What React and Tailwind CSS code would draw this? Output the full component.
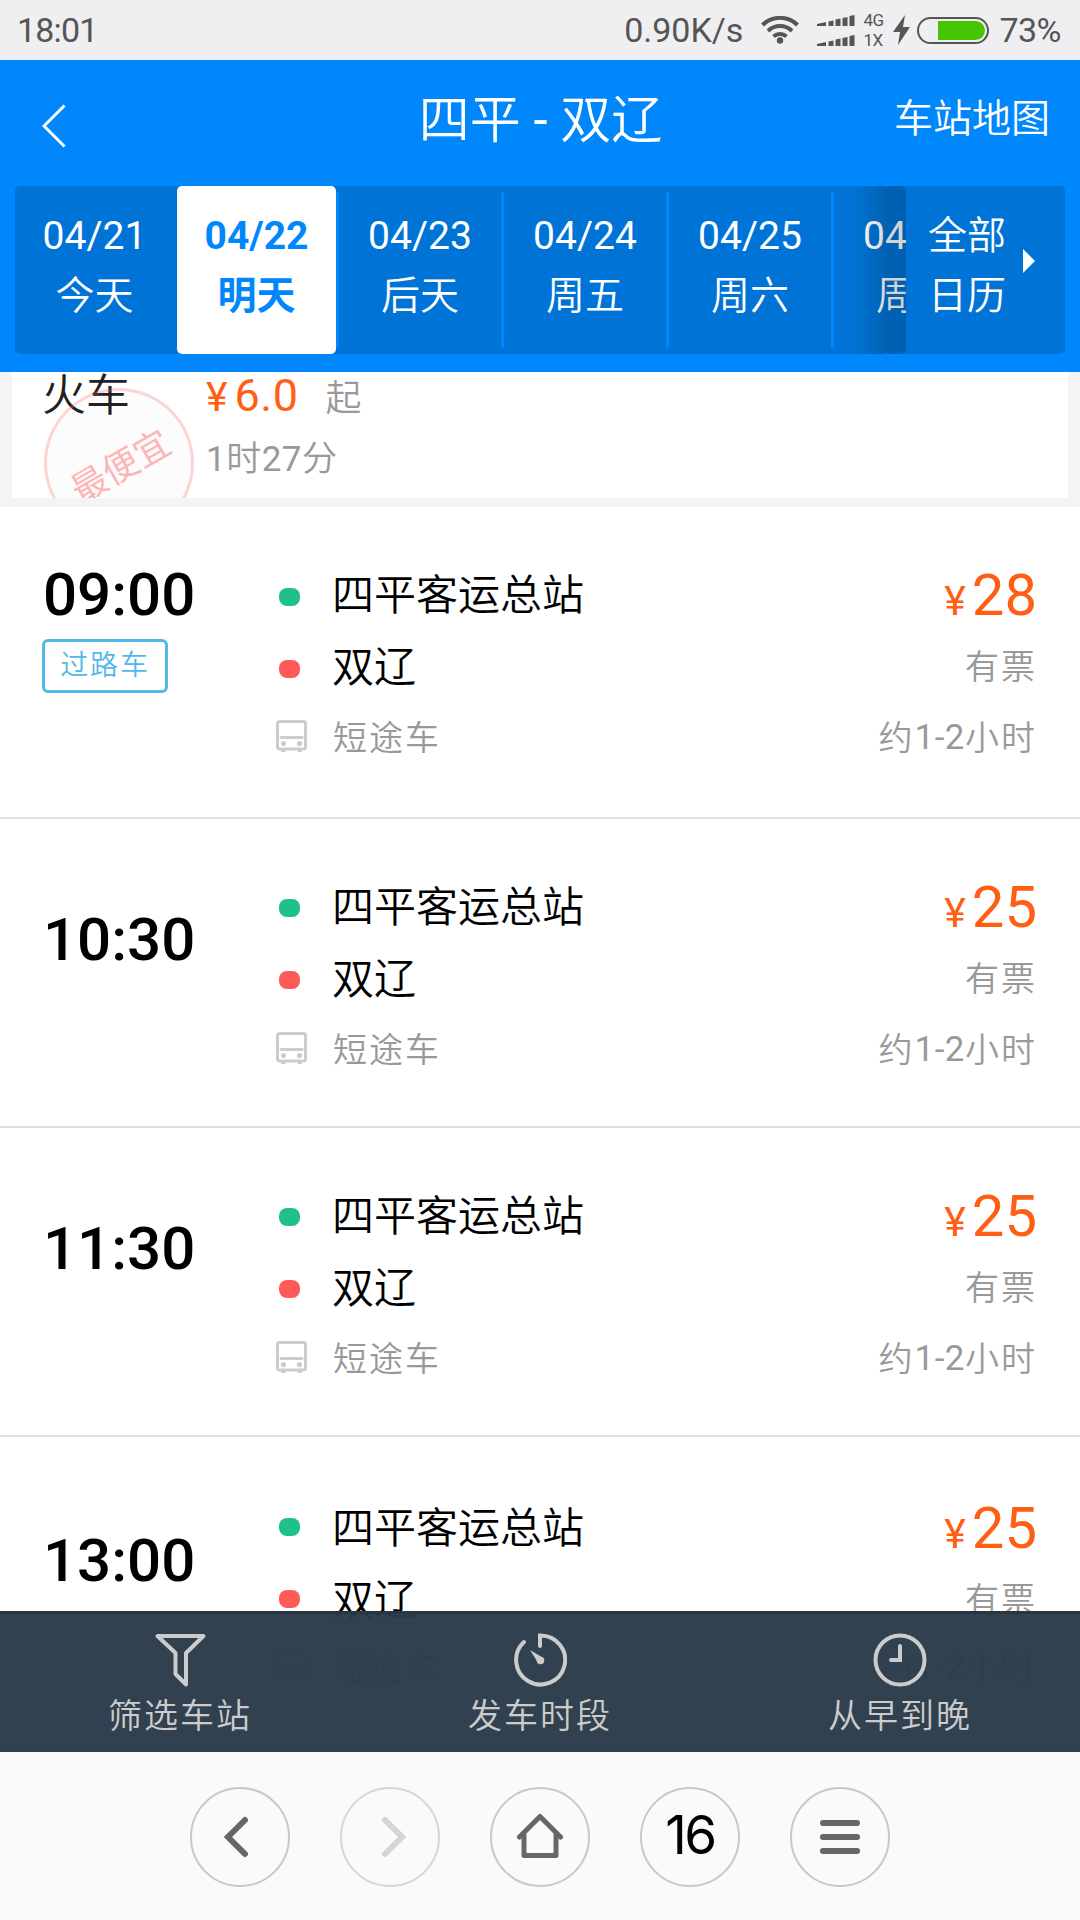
const days = [
  { date: '04/21', label: '今天' },
  { date: '04/22', label: '明天' },
  { date: '04/23', label: '后天' },
  { date: '04/24', label: '周五' },
  { date: '04/25', label: '周六' },
  { date: '04/26', label: '周日' },
];

const trips = [
  { time: '09:00', price: 28, tag: '过路车' },
  { time: '10:30', price: 25 },
  { time: '11:30', price: 25 },
  { time: '13:00', price: 25, last: true },
];

function StatusBar() {
  return (
    <div className="flex h-[60px] shrink-0 items-center bg-[#efeff1] pl-[17px] pr-[19px] text-[34px] text-[#555]">
      <span className="w-[84px] tracking-[-0.8px]">18:01</span>
      <span className="ml-auto">0.90K/s</span>
      <svg className="ml-[18px] h-[28px] w-[38px]" viewBox="0 0 38 28" fill="none" stroke="#555" strokeWidth="4">
        <path d="M1.500 9 A25 25 0 0 1 36.500 9" />
        <path d="M7 15 A17 17 0 0 1 31 15" />
        <path d="M12.500 20.500 A9.500 9.500 0 0 1 25.500 20.500" />
        <circle cx="19" cy="24.500" r="3.200" fill="#555" stroke="none" />
      </svg>
      <div className="ml-[18px] flex flex-col gap-[9px]">
        <Signal />
        <Signal />
      </div>
      <div className="ml-[8px] flex w-[22px] flex-col text-[17px] leading-[20px] tracking-[-0.5px]">
        <span>4G</span>
        <span>1X</span>
      </div>
      <svg className="ml-[8px] h-[30px] w-[17px]" viewBox="0 0 17 30" fill="#555">
        <path d="M12 0 L0 17 H7 L5 30 L17 12 H10 Z" />
      </svg>
      <div className="ml-[7px] flex h-[27px] w-[72px] justify-end rounded-full border-2 border-[#555] p-[2px]">
        <div className="h-full w-[47px] rounded-r-full bg-[#47c400]"></div>
      </div>
      <span className="ml-[10px] tracking-[-0.5px]">73%</span>
    </div>
  );
}

function Signal() {
  return (
    <svg className="h-[11px] w-[38px]" viewBox="0 0 38 11" fill="#555">
      <path d="M0 9 L9 7 V11 H0 Z M11.500 6.500 L16.500 5.500 V11 H11.500 Z M18.500 4.500 L23.500 3.500 V11 H18.500 Z M25.500 3 L30.500 2 V11 H25.500 Z M32.500 1 L37.500 0 V11 H32.500 Z" />
    </svg>
  );
}

function Header() {
  return (
    <div className="flex h-[126px] items-center pl-[42px] pr-[30px] text-white">
      <div className="flex flex-1 items-center">
        <svg className="mt-[6px] h-[44px] w-[24px]" viewBox="0 0 24 44" fill="none" stroke="#fff" strokeWidth="3">
          <path d="M22.500 1.500 L2 22 L22.500 42.500" />
        </svg>
      </div>
      <h1 className="mb-[4px] mr-[11px] text-[51px] font-[350]">
        四平<span className="font-normal"> - </span>双辽
      </h1>
      <div className="mb-[8px] flex-1 text-right text-[39px] font-[350]">车站地图</div>
    </div>
  );
}

function DateStrip() {
  return (
    <div className="mx-[15px] flex h-[168px] rounded-[5px] bg-[#0074d6] text-white">
      <div className="relative flex w-[891px] overflow-hidden rounded-[5px]">
        {days.map((day, i) => (
          <div
            key={day.date}
            className={`flex shrink-0 ${i === 0 ? 'w-[162px] pr-[3px]' : i === 1 ? 'w-[162px]' : 'w-[165px]'}`}
          >
            <div
              className={`flex flex-1 flex-col items-center pt-[20px] text-[39px] leading-[60px] ${
                i === 1 ? 'rounded-[5px] bg-white font-bold text-[#0087fb]' : 'font-[350]'
              }`}
            >
              <span className={i === 1 ? '' : 'font-normal'}>{day.date}</span>
              <span className="leading-[61px]">{day.label}</span>
            </div>
            {i > 0 && <div className="my-[6px] w-[3px] bg-[#0087fb]"></div>}
          </div>
        ))}
        {/* Shadow cast by the calendar button over the scrolling days */}
        <div className="absolute right-[21px] top-0 h-full w-[34px] bg-gradient-to-r from-black/0 to-black/15"></div>
        <div className="absolute right-0 top-0 h-full w-[21px] rounded-[5px] bg-black/17"></div>
      </div>
      <div className="flex flex-1 items-center pl-[22px]">
        <div className="mt-[-9px] w-[80px] text-[39px] font-[350] leading-[60px]">
          全部
          <br />
          日历
        </div>
        <svg className="ml-[15px] mt-[-18px] h-[24px] w-[12px]" viewBox="0 0 12 24" fill="#fff">
          <path d="M0 0 L12 12 L0 24 Z" />
        </svg>
      </div>
    </div>
  );
}

function TrainCard() {
  return (
    <div className="h-[135px] shrink-0 bg-[#f4f4f4] px-[12px] pb-[9px]">
      <div className="relative flex h-[126px] overflow-hidden bg-white">
        <div className="w-[194px] pl-[30px] text-[44px] font-[350] leading-[49px] text-[#222]">火车</div>
        <div className="text-[#999]">
          <div className="flex h-[46px] items-baseline leading-[47px]">
            <span className="text-[41px] text-[#ff5f14]">¥</span>
            <span className="ml-[7px] text-[45px] tracking-[0.5px] text-[#ff5f14]">6.0</span>
            <span className="ml-[27px] text-[36px] font-[350]">起</span>
          </div>
          <div className="mt-[19px] text-[35px] font-[350] leading-[46px] tracking-[0.5px]">
            <span className="font-normal">1</span>时<span className="font-normal">27</span>分
          </div>
        </div>
        <div className="absolute left-[32px] top-[16px] flex h-[150px] w-[150px] items-center justify-center rounded-full border-[3px] border-[#ff5a5a]/25 bg-black/1">
          <span className="ml-[5px] mt-[8px] -rotate-30 whitespace-nowrap text-[36px] text-[#ff5a5a]/45">最便宜</span>
        </div>
      </div>
    </div>
  );
}

function BusIcon() {
  return (
    <svg className="mb-[3px] h-[33px] w-[31px]" viewBox="0 0 31 33" fill="none" stroke="#ccc" strokeWidth="3">
      <rect x="1.500" y="1.500" width="28" height="27.500" rx="2" />
      <path d="M5 17.500 H26" strokeLinecap="round" />
      <path d="M5 30.500 H9.500 M21.500 30.500 H26" />
      <g fill="#ccc" stroke="none">
        <circle cx="7.500" cy="23.500" r="2.600" />
        <circle cx="23.500" cy="23.500" r="2.600" />
      </g>
    </svg>
  );
}

function Stop({ name, color, last, tag }) {
  return (
    <div className="flex h-[72px] items-center">
      <div className={`h-[18px] w-[21px] rounded-[8px] ${color} ${last ? 'mt-[-2px]' : tag ? 'mt-[4px]' : 'mt-[2px]'}`}></div>
      <span className="ml-[32px] mt-[2px] text-[42px] font-[350] leading-[60px] text-black">{name}</span>
    </div>
  );
}

function TripRow({ trip }) {
  const { last, tag } = trip;
  return (
    <div
      className={`flex shrink-0 border-b-2 border-[#dfdfdf] pl-[42px] pr-[43px] ${last ? 'pt-[55px]' : 'pt-[52px]'} ${
        tag ? 'h-[312px]' : 'h-[309px]'
      }`}
    >
      <div className={`w-[237px] ${tag ? '' : 'pt-[33px]'}`}>
        <div className="pl-[1px] text-[60px] font-medium leading-[72px] text-black">{trip.time}</div>
        {tag && (
          <div className="mt-[8px] flex h-[54px] w-[126px] items-center justify-center rounded-[6px] border-[3px] border-[#50b9e8] text-[28px] font-[350] tracking-[1.800px] text-[#50b9e8]">
            {tag}
          </div>
        )}
      </div>
      <div className="flex flex-col">
        <Stop name="四平客运总站" color="bg-[#20c08a]" last={last} tag={tag} />
        <Stop name="双辽" color="bg-[#ff5a5a]" last={last} tag={tag} />
        <div className={`ml-[-3px] flex h-[72px] items-center ${last ? 'mt-[-4px]' : 'mt-[-1px]'}`}>
          <BusIcon />
          <span className="ml-[26px] text-[34px] font-[350] tracking-[2px] text-[#999]">短途车</span>
        </div>
      </div>
      <div className="ml-auto flex flex-col items-end text-[34px] font-[350] text-[#999]">
        <div className="flex h-[72px] items-baseline font-normal leading-[72px] text-[#ff5f14]">
          <span className="text-[41px]">¥</span>
          <span className="ml-[6px] text-[58px]">{trip.price}</span>
        </div>
        <div className="flex h-[72px] items-center tracking-[2px]">有票</div>
        <div className={`flex h-[72px] items-center tracking-[2px] ${last ? 'mt-[-4px]' : 'mt-[-1px]'}`}>
          约<span className="text-[35px] font-normal tracking-[0.5px]">1-2</span>小时
        </div>
      </div>
    </div>
  );
}

function FilterIcon() {
  return (
    <svg className="ml-[2px] h-[54px] w-[54px]" viewBox="0 0 54 54" fill="none" stroke="#ccc" strokeWidth="4" strokeLinejoin="round">
      <path d="M3.500 3 H49.500 L32 20 V51.500 L21.500 41 V20 Z" />
    </svg>
  );
}

function PeriodIcon() {
  return (
    <svg className="mr-[1px] h-[54px] w-[54px]" viewBox="0 0 54 54" fill="none" stroke="#ccc" strokeWidth="4" strokeLinecap="round">
      <path d="M11 9 A24.500 24.500 0 1 0 27 2.500 V13" />
      <path d="M17 17 L30.500 25 L25.500 30.500 Z" fill="#ccc" stroke="none" />
      <circle cx="27.500" cy="27.500" r="3.800" fill="#ccc" stroke="none" />
    </svg>
  );
}

function ClockIcon() {
  return (
    <svg className="h-[54px] w-[54px]" viewBox="0 0 54 54" fill="none" stroke="#ccc" strokeWidth="4" strokeLinecap="round">
      <circle cx="27" cy="27" r="24.500" />
      <path d="M27 13 V27 H18" />
    </svg>
  );
}

const filters = [
  { label: '筛选车站', Icon: FilterIcon },
  { label: '发车时段', Icon: PeriodIcon },
  { label: '从早到晚', Icon: ClockIcon },
];

function NavCircle({ faded, children }) {
  return (
    <div
      className={`flex h-[100px] w-[100px] items-center justify-center rounded-full border-2 border-[#c8c8c8] ${
        faded ? 'opacity-70' : ''
      }`}
    >
      {children}
    </div>
  );
}

function BrowserNav() {
  return (
    <div className="flex h-[168px] shrink-0 justify-center gap-[50px] bg-[#fafafa] pt-[35px]">
      <NavCircle>
        <svg className="mr-[8px] h-[42px] w-[26px]" viewBox="0 0 26 42" fill="none" stroke="#666" strokeWidth="6" strokeLinecap="round">
          <path d="M22 4 L5 21 L22 38" />
        </svg>
      </NavCircle>
      <NavCircle faded>
        <svg className="ml-[8px] h-[42px] w-[26px]" viewBox="0 0 26 42" fill="none" stroke="#c6c6c6" strokeWidth="6" strokeLinecap="round">
          <path d="M4 4 L21 21 L4 38" />
        </svg>
      </NavCircle>
      <NavCircle>
        <svg className="mb-[2px] h-[46px] w-[48px]" viewBox="0 0 48 46" fill="none" stroke="#666" strokeWidth="5" strokeLinecap="round" strokeLinejoin="round">
          <path d="M3.500 24 L24 3.500 L44.500 24" />
          <path d="M8 22 V42.500 H40 V22" />
        </svg>
      </NavCircle>
      <NavCircle>
        <span className="mt-[-2px] font-[Inter] text-[53px] tracking-[-2.5px] text-black">16</span>
      </NavCircle>
      <NavCircle>
        <div className="flex flex-col gap-[8px]">
          <div className="h-[6px] w-[40px] rounded-full bg-[#666]"></div>
          <div className="h-[6px] w-[40px] rounded-full bg-[#666]"></div>
          <div className="h-[6px] w-[40px] rounded-full bg-[#666]"></div>
        </div>
      </NavCircle>
    </div>
  );
}

export default function App() {
  return (
    <div className="flex h-[1920px] w-[1080px] flex-col overflow-hidden bg-white font-[Roboto,'Noto_Sans_CJK_SC',sans-serif]">
      <StatusBar />
      <div className="h-[312px] shrink-0 bg-[#0087fb]">
        <Header />
        <DateStrip />
      </div>
      <div className="relative flex h-[1380px] flex-col overflow-hidden">
        <TrainCard />
        {trips.map((trip) => (
          <TripRow key={trip.time} trip={trip} />
        ))}
        {/* Filter bar floats over the list, which shows faintly through it */}
        <div className="absolute bottom-0 left-0 grid h-[141px] w-full grid-cols-3 border-t-[3px] border-[#283543] bg-[#2b3b49]/97">
          {filters.map(({ label, Icon }) => (
            <div key={label} className="flex flex-col items-center pt-[19px] text-[34px] font-[350] leading-[59px] tracking-[2px] text-[#ccc]">
              <Icon />
              <span>{label}</span>
            </div>
          ))}
        </div>
      </div>
      <BrowserNav />
    </div>
  );
}
